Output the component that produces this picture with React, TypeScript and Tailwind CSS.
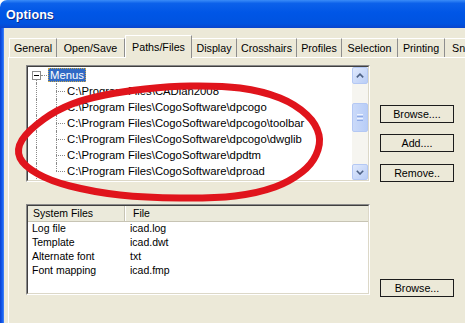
import React from "react";

type Pt = [number, number];

function closedCurve(pts: Pt[]): string {
  const n = pts.length;
  let d = `M${pts[0][0]},${pts[0][1]}`;
  for (let i = 0; i < n; i++) {
    const p0 = pts[(i - 1 + n) % n];
    const p1 = pts[i];
    const p2 = pts[(i + 1) % n];
    const p3 = pts[(i + 2) % n];
    const c1x = p1[0] + (p2[0] - p0[0]) / 6;
    const c1y = p1[1] + (p2[1] - p0[1]) / 6;
    const c2x = p2[0] - (p3[0] - p1[0]) / 6;
    const c2y = p2[1] - (p3[1] - p1[1]) / 6;
    d += ` C${c1x.toFixed(1)},${c1y.toFixed(1)} ${c2x.toFixed(1)},${c2y.toFixed(1)} ${p2[0]},${p2[1]}`;
  }
  return d + " Z";
}

const loop: Pt[] = [
  [22, 140],
  [44, 119],
  [72, 104],
  [105, 95],
  [145, 89],
  [190, 86],
  [240, 88],
  [280, 98],
  [307, 115],
  [319, 135],
  [316, 155],
  [302, 172],
  [275, 187],
  [235, 196],
  [180, 198],
  [120, 195],
  [70, 186],
  [38, 174],
  [20, 158],
];

const children = [
  "C:\\Program Files\\CADian2008",
  "C:\\Program Files\\CogoSoftware\\dpcogo",
  "C:\\Program Files\\CogoSoftware\\dpcogo\\toolbar",
  "C:\\Program Files\\CogoSoftware\\dpcogo\\dwglib",
  "C:\\Program Files\\CogoSoftware\\dpdtm",
  "C:\\Program Files\\CogoSoftware\\dproad",
];

const sysFiles: [string, string][] = [
  ["Log file", "icad.log"],
  ["Template", "icad.dwt"],
  ["Alternate font", "txt"],
  ["Font mapping", "icad.fmp"],
];

function Chevron({ up }: { up: boolean }) {
  return (
    <svg width="8" height="5" viewBox="0 0 8 5">
      <path
        d={up ? "M0.8 4.4 L4 1.2 L7.2 4.4" : "M0.8 0.8 L4 4 L7.2 0.8"}
        fill="none"
        stroke="#4d6185"
        strokeWidth="1.6"
      />
    </svg>
  );
}

function ArrowBtn({ up, h }: { up: boolean; h: string }) {
  return (
    <div
      className={`${h} w-full flex items-center justify-center rounded-[2px] border border-[#b4c8f4] bg-gradient-to-br from-[#e0e9fc] to-[#b9cdf6] shrink-0`}
    >
      <Chevron up={up} />
    </div>
  );
}

function Btn({ label, className = "" }: { label: string; className?: string }) {
  return (
    <div
      className={`w-[74px] h-[18px] flex items-center justify-center border border-[#1c1c1c] bg-[#ece9d8] text-[10.7px] text-black ${className}`}
    >
      {label}
    </div>
  );
}

function Tab({ label, w, first = false }: { label: string; w: string; first?: boolean }) {
  return (
    <div
      className={`${w} h-[19px] flex items-center justify-center border-t border-white border-r border-r-[#8e8e8e] ${
        first ? "border-l border-l-white" : ""
      } text-[10.7px] text-black whitespace-nowrap overflow-hidden shrink-0`}
    >
      {label}
    </div>
  );
}

export default function App() {
  return (
    <div className="w-[465px] h-[323px] overflow-hidden relative bg-white font-['Liberation_Sans',Arial,sans-serif] select-none">
      {/* title bar */}
      <div className="h-[28px] rounded-tl-[7px] bg-[linear-gradient(180deg,#3a8cf8_0%,#0c61ea_12%,#0056e6_45%,#0053e0_85%,#0a45cc_100%)] flex items-center pl-[6px] pt-[3px]">
        <span className="text-white font-bold text-[12.5px] tracking-[0.1px] [text-shadow:1px_1px_0_#0b2a8a]">
          Options
        </span>
      </div>

      <div className="flex h-[295px] w-[465px]">
        {/* left frame */}
        <div className="w-[4px] shrink-0 bg-[linear-gradient(90deg,#0a3fd0_0%,#1560f0_60%,#4d86f4_100%)]" />

        {/* body */}
        <div className="flex-1 min-w-0 overflow-hidden bg-[#ece9d8] pl-[4px] pt-[7px] flex flex-col">
          {/* tabs */}
          <div className="h-[22px] flex items-end pl-[1px] relative z-10">
            <Tab label="General" w="w-[48px]" first />
            <Tab label="Open/Save" w="w-[68px]" />
            <div className="w-[67px] h-[23px] -mb-[1px] flex items-start justify-center pt-[3px] bg-[#ece9d8] border-t border-l border-white border-r border-r-[#8e8e8e] text-[10.7px] text-black shrink-0">
              Paths/Files
            </div>
            <Tab label="Display" w="w-[45px]" />
            <Tab label="Crosshairs" w="w-[60px]" />
            <Tab label="Profiles" w="w-[45px]" />
            <Tab label="Selection" w="w-[56px]" />
            <Tab label="Printing" w="w-[47px]" />
            <Tab label="Snap" w="w-[40px]" />
          </div>

          {/* panel */}
          <div className="flex-1 border-t border-l border-white pl-[17px] pt-[7px]">
            {/* row 1 */}
            <div className="flex">
              <div className="w-[344px] h-[117px] shrink-0 border border-t-[#8a8a8a] border-l-[#8a8a8a] border-r-white border-b-white">
                <div className="w-full h-full border border-t-[#404040] border-l-[#404040] border-r-[#dcd8c8] border-b-[#dcd8c8] bg-white flex">
                  {/* tree */}
                  <div className="flex-1 min-w-0 overflow-hidden text-[11.3px] text-black">
                    {/* Menus row */}
                    <div className="h-[16px] flex items-center">
                      <div className="w-[4px] shrink-0" />
                      <div className="w-[9px] h-[16px] flex flex-col shrink-0">
                        <div className="h-[4px]" />
                        <div className="w-[9px] h-[9px] border border-[#8c8c8c] bg-white flex items-center justify-center">
                          <div className="w-[5px] h-[1px] bg-black" />
                        </div>
                        <div className="h-[3px] flex">
                          <div className="w-[4px]" />
                          <div className="h-full border-l border-dotted border-[#8a8a8a]" />
                        </div>
                      </div>
                      <div className="w-[6px] border-t border-dotted border-[#8a8a8a] shrink-0" />
                      <div className="w-[1px] shrink-0" />
                      <div className="h-[14px] px-[2px] flex items-center bg-[#316ac5] text-white outline outline-1 outline-dotted outline-[#c8a84c] -outline-offset-1">
                        Menus
                      </div>
                    </div>
                    {children.map((c, i) => (
                      <div key={c} className="h-[16px] flex items-center">
                        <div className="w-[8px] shrink-0" />
                        <div className="h-[16px] border-l border-dotted border-[#8a8a8a] shrink-0" />
                        <div className="w-[19px] shrink-0" />
                        <div className="w-[9px] h-[16px] flex flex-col shrink-0">
                          <div className="h-[8px] border-l border-dotted border-[#8a8a8a]" />
                          <div
                            className={`h-[8px] border-t border-dotted border-[#8a8a8a] ${
                              i < children.length - 1 ? "border-l" : ""
                            }`}
                          />
                        </div>
                        <div className="w-[2px] shrink-0" />
                        <span className="whitespace-nowrap">{c}</span>
                      </div>
                    ))}
                  </div>
                  {/* scrollbar */}
                  <div className="w-[16px] h-full shrink-0 flex flex-col bg-[#f6f5f0]">
                    <ArrowBtn up h="h-[17px]" />
                    <div className="flex-1 pt-[19px]">
                      <div className="h-[29px] rounded-[2px] border border-[#b4c8f4] bg-gradient-to-r from-[#cbdaf9] to-[#b8cdf7] flex flex-col items-center justify-center gap-[1px]">
                        <div className="w-[6px] h-[1px] bg-[#eef3fe]" />
                        <div className="w-[6px] h-[1px] bg-[#8faae6]" />
                        <div className="w-[6px] h-[1px] bg-[#eef3fe]" />
                        <div className="w-[6px] h-[1px] bg-[#8faae6]" />
                      </div>
                    </div>
                    <ArrowBtn up={false} h="h-[16px]" />
                  </div>
                </div>
              </div>
              <div className="ml-[10px] pt-[40px] flex flex-col shrink-0">
                <Btn label="Browse...." />
                <Btn label="Add...." className="mt-[11px]" />
                <Btn label="Remove.." className="mt-[12px]" />
              </div>
            </div>

            {/* row 2 */}
            <div className="flex mt-[22px]">
              <div className="w-[344px] h-[91px] shrink-0 border border-t-[#8a8a8a] border-l-[#8a8a8a] border-r-white border-b-white">
                <div className="w-full h-full border border-t-[#404040] border-l-[#404040] border-r-[#dcd8c8] border-b-[#dcd8c8] bg-white flex flex-col text-[10.5px] text-black">
                  <div className="h-[16px] flex bg-[#ebeadb] border-b border-[#c7c4b4] shrink-0">
                    <div className="w-[97px] pl-[5px] flex items-center border-r border-[#c7c4b4]">
                      System Files
                    </div>
                    <div className="flex-1 pl-[7px] flex items-center border-l border-white">File</div>
                  </div>
                  {sysFiles.map(([a, b]) => (
                    <div key={a} className="h-[14px] flex items-center">
                      <div className="w-[98px] pl-[4px] whitespace-nowrap">{a}</div>
                      <div className="pl-[4px]">{b}</div>
                    </div>
                  ))}
                </div>
              </div>
              <div className="ml-[10px] pt-[75px] flex flex-col shrink-0">
                <Btn label="Browse..." />
              </div>
            </div>
          </div>
        </div>
      </div>

      {/* red hand-drawn ellipse annotation */}
      <svg
        className="absolute inset-0 pointer-events-none"
        width="465"
        height="323"
        viewBox="0 0 465 323"
      >
        <path
          d={closedCurve(loop)}
          fill="none"
          stroke="#e0141c"
          strokeWidth="7"
          strokeLinejoin="round"
        />
      </svg>
    </div>
  );
}
